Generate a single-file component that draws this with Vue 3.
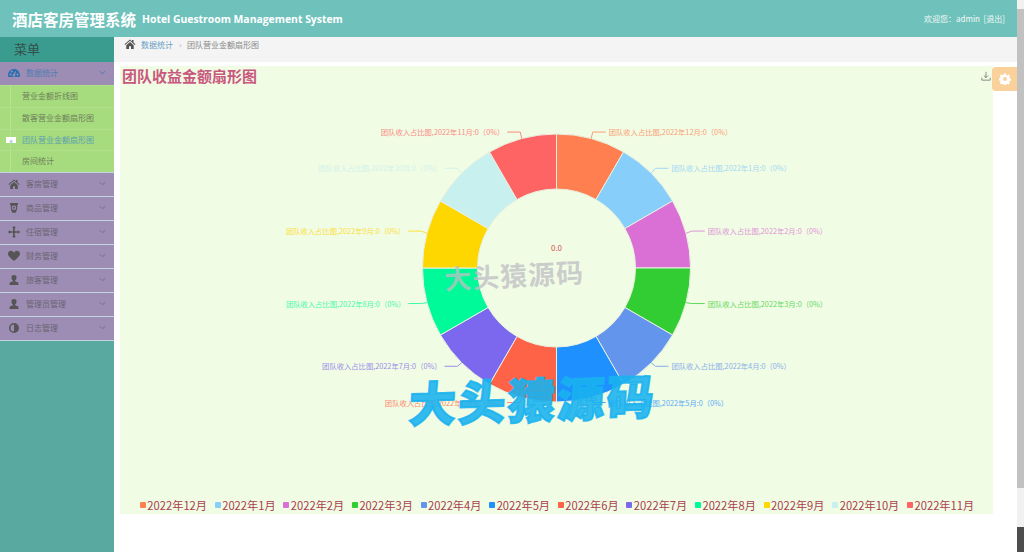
<template>
  <div class="page">
    <header class="topbar">
      <div class="brand">
        <span class="brand-cn">酒店客房管理系统</span>
        <span class="brand-en">Hotel Guestroom Management System</span>
      </div>
      <div class="user">欢迎您：admin &nbsp;[退出]</div>
    </header>

    <div class="body">
      <aside class="sidebar">
        <div class="menu-title">菜单</div>
        <div class="group active">
          <svg class="g-icon" viewBox="0 0 24 24"><path d="M12 4C5.400 4 0 9.400 0 16c0 1.500.3 2.800.8 4h22.400c.5-1.200.8-2.500.8-4 0-6.600-5.400-12-12-12zM5 17a2 2 0 1 1 0-4 2 2 0 0 1 0 4zm2.500-6a2 2 0 1 1 0-4 2 2 0 0 1 0 4zm6 7.500a2.500 2.500 0 0 1-3.800-3.200L15 8.500l1 .4-2 6.600c.9.700 1 2.200-.5 3zM19 17a2 2 0 1 1 0-4 2 2 0 0 1 0 4z" /></svg>
          <span class="g-label">数据统计</span>
          <svg class="chev" viewBox="0 0 10 6"><path d="M1 1l4 3.500L9 1" /></svg>
        </div>
        <ul class="subs">
          <li v-for="s in subs" :key="s" :class="{ on: s === current }">
            <span class="tick"></span>
            <span v-if="s === current" class="arrow">»</span>
            {{ s }}
          </li>
        </ul>
        <div v-for="g in groups" :key="g.name" class="group">
          <svg class="g-icon" viewBox="0 0 24 24"><path :d="g.icon" /></svg>
          <span class="g-label">{{ g.name }}</span>
          <svg class="chev" viewBox="0 0 10 6"><path d="M1 1l4 3.500L9 1" /></svg>
        </div>
      </aside>

      <main class="main">
        <div class="crumbs">
          <svg class="home" viewBox="0 0 24 24"><path :d="homePath" /></svg>
          <span class="crumb-link">数据统计</span>
          <span class="crumb-sep">›</span>
          <span class="crumb-cur">团队营业金额扇形图</span>
        </div>

        <section class="card">
          <h2 class="card-title">团队收益金额扇形图</h2>
          <svg class="save" viewBox="0 0 12 12"><path d="M6 1v7M3.500 5.500L6 8l2.500-2.500M1 8v3h10V8" /></svg>
          <svg class="chart" viewBox="120 88 873 409">
            <path v-for="s in slices" :key="s.name" :d="s.d" :fill="s.color" stroke="#e8f0e0" stroke-width="1" />
            <g v-for="s in slices" :key="'l' + s.name" opacity="0.75">
              <polyline :points="s.line" :stroke="s.color" fill="none" stroke-width="1" />
              <text :x="s.tx" :y="s.ty" :fill="s.color" :text-anchor="s.anchor" class="pie-label">团队收入占比图,{{ s.name }}:0（0%）</text>
            </g>
            <text x="556.500" y="251" text-anchor="middle" class="center-val">0.0</text>
          </svg>
          <div class="legend">
            <span v-for="s in slices" :key="'k' + s.name" class="leg-item">
              <i class="leg-dot" :style="{ background: s.color }"></i>{{ s.name }}
            </span>
          </div>
          <div class="mark-gray">大头猿源码</div>
          <div class="mark-blue">大头猿源码</div>
        </section>
      </main>
      <div class="gear-btn">
        <svg viewBox="0 0 24 24"><path :d="gearPath" fill-rule="evenodd" /></svg>
      </div>
      <div class="scroll">
        <div class="thumb"></div>
        <div class="corner"></div>
      </div>
    </div>
  </div>
</template>

<script setup>
import { computed } from 'vue';

const current = '团队营业金额扇形图';
const subs = ['营业金额折线图', '散客营业金额扇形图', current, '房间统计'];

const homePath = 'M12 3L1 12.500l1.300 1.500L12 5.700 21.700 14l1.300-1.500-4-3.400V4h-3v2.500zM4.500 14.500V22h5.500v-5.500h4V22h5.500v-7.500L12 8z';
const userPath = 'M12 2a5 5 0 0 1 5 5.500c0 2.500-1.500 5-3 5.800v1.200c3 1 7 2 7 4.500V22H3v-3c0-2.500 4-3.500 7-4.500v-1.200c-1.500-.8-3-3.300-3-5.800A5 5 0 0 1 12 2z';
const gearPath = 'M10 1h4l.6 3a8 8 0 0 1 2 .9l2.600-1.700 2.800 2.800-1.700 2.600a8 8 0 0 1 .9 2l3 .6v4l-3 .6a8 8 0 0 1-.9 2l1.700 2.600-2.800 2.800-2.600-1.700a8 8 0 0 1-2 .9l-.6 3h-4l-.6-3a8 8 0 0 1-2-.9l-2.600 1.700L1.600 20l1.700-2.600a8 8 0 0 1-.9-2l-3-.6v-4l3-.6a8 8 0 0 1 .9-2L1.600 5.600 4.400 2.800 7 4.500a8 8 0 0 1 2-.9zM12 8a4 4 0 1 0 0 8 4 4 0 0 0 0-8z';

const groups = [
  { name: '客房管理', icon: homePath },
  { name: '商品管理', icon: 'M4 2h16v3l-1.500 1v4c0 5-1.500 9-3.500 11.500H9C7 19 5.500 15 5.500 10V6L4 5zm8 5a4.500 4.500 0 1 0 0 9 4.500 4.500 0 0 0 0-9zm0 2.500a2 2 0 1 1 0 4 2 2 0 0 1 0-4z' },
  { name: '住宿管理', icon: 'M12 0l4 4h-2.300v6.300H20V8l4 4-4 4v-2.300h-6.300V20H16l-4 4-4-4h2.300v-6.300H4V16l-4-4 4-4v2.300h6.300V4H8z' },
  { name: '财务管理', icon: 'M12 22C8 18 0 13 0 7.500 0 3.500 3 1.500 6 1.500c2.500 0 4.800 1.500 6 4 1.200-2.500 3.500-4 6-4 3 0 6 2 6 6C24 13 16 18 12 22z' },
  { name: '旅客管理', icon: userPath },
  { name: '管理员管理', icon: userPath },
  { name: '日志管理', icon: 'M12 2a10 10 0 1 0 0 20 10 10 0 0 0 0-20zm0 3v14a7 7 0 0 1 0-14z' },
];

const months = ['2022年12月', '2022年1月', '2022年2月', '2022年3月', '2022年4月', '2022年5月', '2022年6月', '2022年7月', '2022年8月', '2022年9月', '2022年10月', '2022年11月'];
const colors = ['#ff7f50', '#87cefa', '#da70d6', '#32cd32', '#6495ed', '#1e90ff', '#ff6347', '#7b68ee', '#00fa9a', '#ffd700', '#c8f0ee', '#ff6464'];

const CX = 556.5;
const CY = 268;
const R = 134;
const r = 79;

// 饼图每一块的路径和引导线
const slices = computed(() => months.map((name, i) => {
  const a0 = (i * 30 * Math.PI) / 180;
  const a1 = ((i + 1) * 30 * Math.PI) / 180;
  const mid = (a0 + a1) / 2;
  const pt = (rad, a) => [CX + rad * Math.sin(a), CY - rad * Math.cos(a)];
  const [x0, y0] = pt(R, a0);
  const [x1, y1] = pt(R, a1);
  const [x2, y2] = pt(r, a1);
  const [x3, y3] = pt(r, a0);
  const [mx, my] = pt(R, mid);
  const [ex, ey] = pt(140, mid);
  const dir = Math.sin(mid) > 0 ? 1 : -1;
  return {
    name,
    color: colors[i],
    d: `M${x0} ${y0}A${R} ${R} 0 0 1 ${x1} ${y1}L${x2} ${y2}A${r} ${r} 0 0 0 ${x3} ${y3}Z`,
    line: `${mx},${my} ${ex},${ey - 0.7} ${ex + dir * 13},${ey - 0.7}`,
    tx: ex + dir * 16,
    ty: ey + 2.3,
    anchor: dir > 0 ? 'start' : 'end',
  };
}));
</script>

<style>
html, body {
  margin: 0;
  background: #fff;
  overflow: hidden;
}
</style>

<style scoped>
.page {
  width: 1024px;
  height: 552px;
  display: flex;
  flex-direction: column;
  font-family: "Noto Sans CJK SC", "Noto Sans", sans-serif;
  overflow: hidden;
}
.topbar {
  height: 37px;
  flex: none;
  background: #6fc2bb;
  display: flex;
  align-items: center;
  justify-content: space-between;
  padding: 0 19px 0 12px;
  box-sizing: border-box;
  color: #fff;
}
.brand {
  display: flex;
  align-items: center;
  gap: 6px;
}
.brand-cn {
  font-size: 15.500px;
  font-weight: 700;
}
.brand-en {
  font-size: 10.400px;
  font-weight: 700;
  font-family: "Open Sans", sans-serif;
}
.user {
  font-size: 8px;
  color: #f2f8f7;
}
.body {
  flex: 1;
  display: flex;
  position: relative;
  min-height: 0;
}
.sidebar {
  width: 114px;
  flex: none;
  background: #5aa9a0;
}
.menu-title {
  height: 25px;
  background: #3a9c8e;
  color: #33504c;
  font-size: 13px;
  line-height: 23px;
  padding-left: 14px;
}
.group {
  height: 23px;
  margin-bottom: 1px;
  background: #9d8cb3;
  box-shadow: 0 1px 0 #c5d3dc;
  display: flex;
  align-items: center;
  padding: 0 8px 2px 8px;
  box-sizing: border-box;
  color: #6a6472;
  font-size: 8px;
}
.group .g-icon {
  width: 12px;
  height: 12px;
  fill: #555;
  flex: none;
}
.group .g-label {
  margin-left: 6px;
  flex: 1;
}
.chev {
  width: 7px;
  height: 5px;
  fill: none;
  stroke: #716c7b;
  stroke-width: 1.200;
  flex: none;
}
.group.active {
  margin-bottom: 0;
  box-shadow: none;
  color: #4d7fb0;
}
.group.active .g-icon {
  fill: #2e6fb0;
}
.group.active .chev {
  stroke: #3f7ab5;
}
.subs {
  list-style: none;
  margin: 0 0 1px;
  padding: 0;
  background: #a6dc7e;
  box-shadow: 0 1px 0 #c5d3dc;
}
.subs li {
  height: 20.750px;
  line-height: 19.500px;
  padding-left: 22px;
  font-size: 8px;
  color: #6f7f5a;
  position: relative;
  border-top: 1px solid #b0e08c;
}
.subs li.on {
  color: #5e9fb0;
}
.tick {
  position: absolute;
  left: 10px;
  top: 0;
  bottom: 0;
  width: 1px;
  background: #b6e296;
}
.arrow {
  position: absolute;
  left: 6px;
  top: 7px;
  width: 10px;
  height: 6px;
  background: #fff;
  color: #5b8fd0;
  font-size: 7px;
  line-height: 6px;
  text-align: center;
}
.main {
  flex: 1;
  min-width: 0;
  padding-right: 7px;
  display: flex;
  flex-direction: column;
}
.crumbs {
  height: 25px;
  flex: none;
  background: #f4f4f4;
  display: flex;
  align-items: center;
  padding-left: 10px;
  padding-bottom: 11px;
  box-sizing: border-box;
  font-size: 8px;
}
.home {
  width: 12px;
  height: 12px;
  fill: #555;
  flex: none;
}
.crumb-link {
  margin-left: 5px;
  color: #6a9fc4;
}
.crumb-sep {
  margin: 0 6px 0 6px;
  width: 2px;
  color: #aaa;
}
.crumb-cur {
  color: #888;
}
.card {
  width: 873px;
  height: 448px;
  margin: 4px 0 0 6px;
  background: #f1fce4;
  position: relative;
  display: flex;
  flex-direction: column;
}
.card-title {
  margin: 0;
  padding-left: 2px;
  height: 22px;
  line-height: 20px;
  font-size: 15px;
  font-weight: 700;
  color: #c9587f;
  flex: none;
}
.save {
  position: absolute;
  right: 2px;
  top: 5px;
  width: 10px;
  height: 10px;
  fill: none;
  stroke: #777;
  stroke-width: 1;
}
.chart {
  width: 873px;
  height: 409px;
  flex: none;
}
.pie-label {
  font-size: 7.300px;
}
.center-val {
  font-size: 8px;
  fill: #d0534f;
}
.legend {
  display: flex;
  justify-content: center;
  gap: 7.700px;
  padding-left: 1px;
  font-size: 11.200px;
  color: #a8404f;
  line-height: 16px;
}
.leg-item {
  display: flex;
  align-items: center;
  gap: 1.500px;
  white-space: nowrap;
}
.leg-dot {
  width: 6px;
  height: 6px;
  border-radius: 1px;
}
.mark-gray {
  position: absolute;
  left: 324px;
  top: 189px;
  font-size: 27px;
  font-weight: 700;
  letter-spacing: 1px;
  color: rgba(190, 190, 195, 0.75);
  white-space: nowrap;
  transform: rotate(-3deg);
}
.mark-blue {
  position: absolute;
  left: 289px;
  top: 297px;
  font-size: 47px;
  font-weight: 900;
  letter-spacing: 2.500px;
  color: rgba(25, 178, 240, 0.88);
  -webkit-text-stroke: 2px rgba(25, 178, 240, 0.88);
  white-space: nowrap;
  transform: rotate(-2deg) skewX(-5deg);
}
.gear-btn {
  position: absolute;
  right: 7px;
  top: 30px;
  width: 25px;
  height: 24px;
  background: #fbd19b;
  border-radius: 4px 0 0 4px;
  display: flex;
  align-items: center;
  justify-content: center;
}
.gear-btn svg {
  width: 12px;
  height: 12px;
  fill: #fff;
}
.scroll {
  position: absolute;
  right: 0;
  top: -37px;
  bottom: 0;
  width: 7px;
  background: #f1f1f1;
  padding-top: 9px;
  box-sizing: border-box;
  display: flex;
  flex-direction: column;
}
.thumb {
  height: 479px;
  background: #c1c1c1;
}
.corner {
  margin-top: auto;
  height: 25px;
  background: #4d4d4d;
}
</style>
